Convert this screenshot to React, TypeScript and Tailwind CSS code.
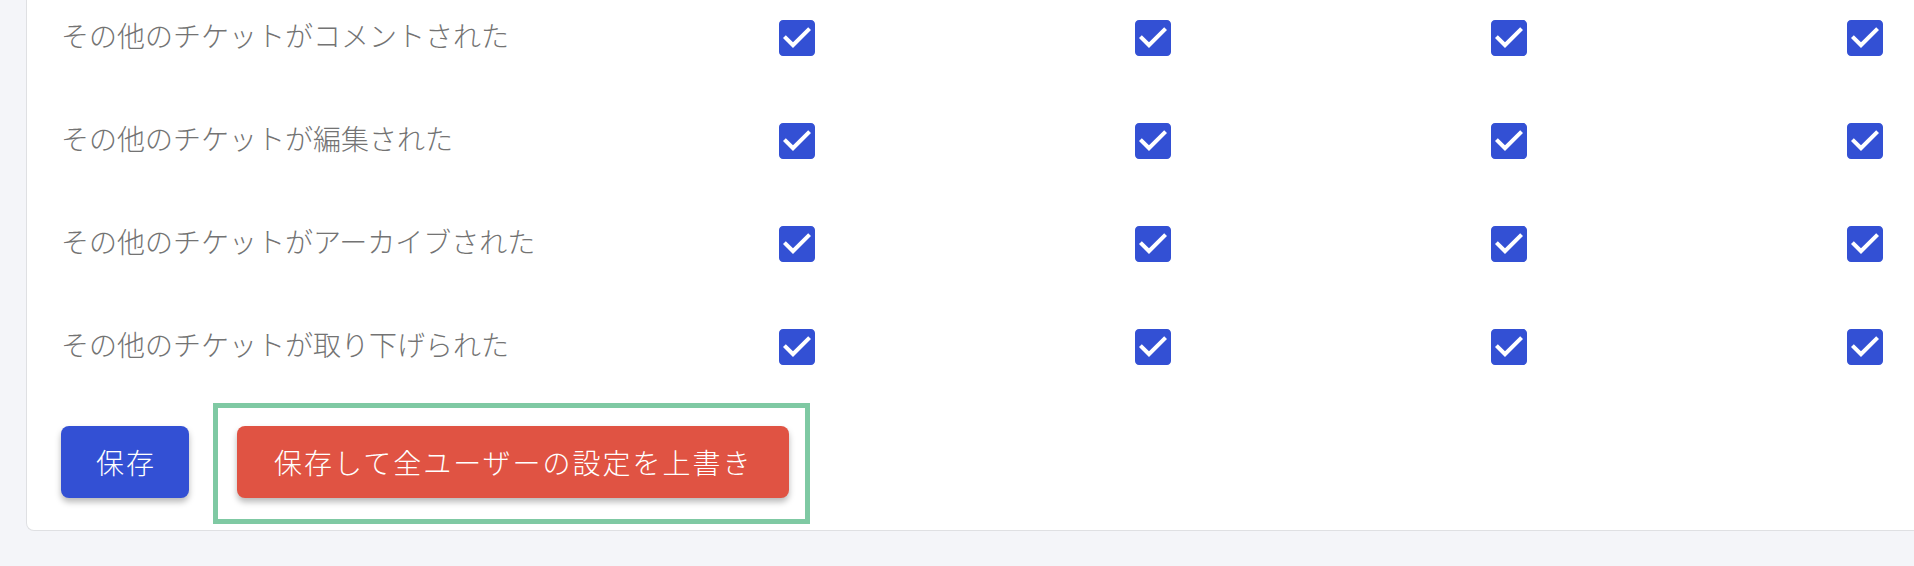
import React from 'react';

const rows = [
  'その他のチケットがコメントされた',
  'その他のチケットが編集された',
  'その他のチケットがアーカイブされた',
  'その他のチケットが取り下げられた',
];

const CheckIcon: React.FC = () => (
  <svg width="48" height="48" viewBox="0 0 24 24" className="block">
    <path
      fill="#3350d4"
      d="M19 3H5c-1.11 0-2 .9-2 2v14c0 1.1.89 2 2 2h14c1.11 0 2-.9 2-2V5c0-1.1-.89-2-2-2zm-9 14l-5-5 1.41-1.41L10 14.17l7.59-7.59L19 8l-9 9z"
    />
  </svg>
);

const App: React.FC = () => {
  return (
    <div className="w-[1914px] h-[566px] overflow-hidden bg-[#f4f5f9] font-[Noto_Sans_CJK_JP,sans-serif]">
      <div className="ml-[26px] mr-[-20px] -mt-[14px] bg-white border-l border-b border-[#dfe0e3] rounded-bl-lg pl-[34px] pb-[6px]">
        {rows.map(label => (
          <div
            key={label}
            className="grid grid-cols-[712px_356px_356px_356px_1fr] h-[103px] items-center"
          >
            <span className="mb-[6px] text-[28px] leading-none font-light text-[#737373]">{label}</span>
            {[0, 1, 2, 3].map(i => (
              <div key={i}>
                <CheckIcon />
              </div>
            ))}
          </div>
        ))}

        <div className="flex items-start mt-[5px]">
          <button className="mt-[23px] h-[72px] pl-[35px] pr-[33px] rounded-lg bg-[#3350d4] text-white text-[28px] font-light tracking-[2px] shadow-[0_4px_6px_rgba(0,0,0,0.28)]">
            保存
          </button>
          <div className="ml-[24px] border-[5px] border-[#7fc9a3] pt-[18px] pb-[21px] pl-[19px] pr-[16px]">
            <button className="h-[72px] pl-[37px] pr-[36px] rounded-lg bg-[#e05343] text-white text-[28px] font-light tracking-[2px] shadow-[0_4px_6px_rgba(0,0,0,0.28)]">
              保存して全ユーザーの設定を上書き
            </button>
          </div>
        </div>
      </div>
    </div>
  );
};

export default App;
